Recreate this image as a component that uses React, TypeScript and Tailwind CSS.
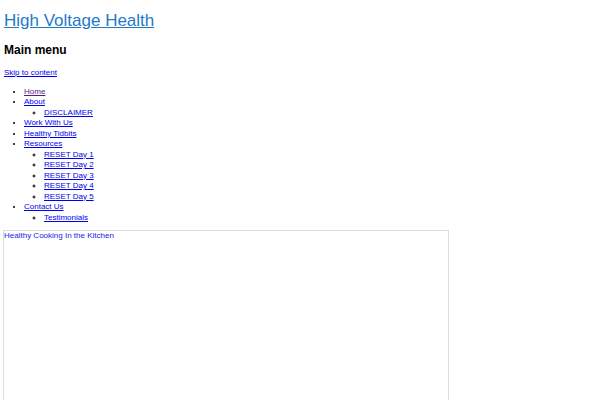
import React from 'react';

type Item = { label: string; visited?: boolean; children?: string[] };

const menu: Item[] = [
  { label: 'Home', visited: true },
  { label: 'About', children: ['DISCLAIMER'] },
  { label: 'Work With Us' },
  { label: 'Healthy Tidbits' },
  { label: 'Resources', children: ['RESET Day 1', 'RESET Day 2', 'RESET Day 3', 'RESET Day 4', 'RESET Day 5'] },
  { label: 'Contact Us', children: ['Testimonials'] },
];

export default function App() {
  return (
    <div className="w-[600px] h-[400px] overflow-hidden bg-white px-[4px] font-['Liberation_Sans',Arial,sans-serif] text-black">
      {/* Site title */}
      <h1 className="pt-[11px] text-[17px] leading-[20px]">
        <a href="#" className="text-[#1e7ac8] underline">High Voltage Health</a>
      </h1>

      <h2 className="mt-[11.5px] text-[12px] leading-[15px] font-bold">Main menu</h2>

      <a href="#" className="block mt-[10px] text-[8px] leading-[10.5px] text-[#0000ee] underline">Skip to content</a>

      <ul className="mt-[8.5px] list-disc pl-[20px] text-[8px] leading-[10.5px]">
        {menu.map((item) => (
          <li key={item.label}>
            <a href="#" className={item.visited ? 'text-[#551a8b] underline' : 'text-[#0000ee] underline'}>
              {item.label}
            </a>
            {item.children && (
              <ul className="list-[circle] pl-[20px]">
                {item.children.map((c) => (
                  <li key={c}>
                    <a href="#" className="text-[#0000ee] underline">{c}</a>
                  </li>
                ))}
              </ul>
            )}
          </li>
        ))}
      </ul>

      {/* Embedded frame */}
      <div className="mt-[7px] -ml-[1px] w-[446px] h-[300px] border border-[#dddddd]">
        <p className="text-[8px] leading-[10.5px] text-[#1a1ae6]">Healthy Cooking In the Kitchen</p>
      </div>
    </div>
  );
}
